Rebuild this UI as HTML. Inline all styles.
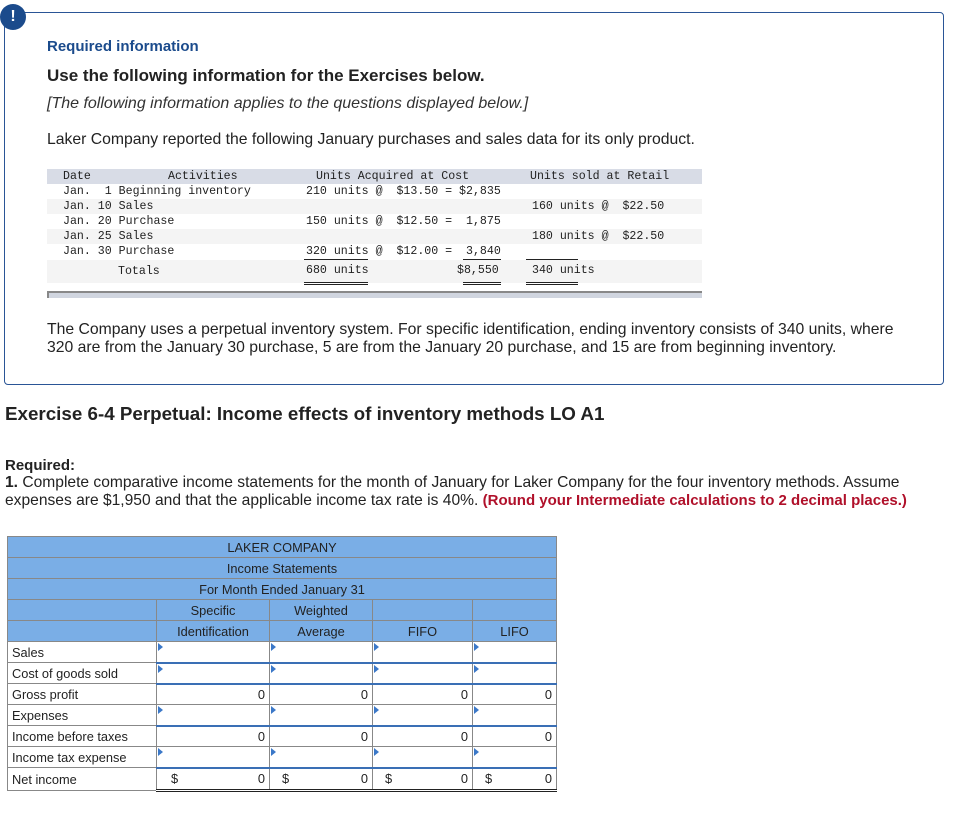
<!DOCTYPE html>
<html><head><style>
body{margin:0;width:955px;height:820px;background:#fff;position:relative;font-family:"Liberation Sans",sans-serif;color:#222;overflow:hidden}
.a{position:absolute;white-space:pre}
.m{font-family:"Liberation Mono",monospace;font-size:11.6px;color:#222}
.box{position:absolute;left:4px;top:12px;width:938px;height:371px;border:1px solid #2a5596;border-radius:4px}
.ic{position:absolute;left:0;top:4px;width:26px;height:26px;border-radius:50%;background:#1b4b8c;color:#fff;font-weight:bold;font-size:16px;text-align:center;line-height:26px}
.p{font-size:15.75px;color:#222}
.band{position:absolute;left:47px;width:655px;background:#f4f4f4}
.ul{position:absolute;border-top:1px solid #222}
.dl{position:absolute;border-top:3px double #222;height:0}
table{position:absolute;left:7px;top:536px;border-collapse:collapse;font-size:12.8px}
td{height:20px;padding:0 4px;border:1px solid #888;box-sizing:border-box}
.h td{background:#7aaee6;text-align:center;color:#222}
.in{border:1px solid #888;border-bottom:2px solid #3a6fb5;position:relative}
.in:before{content:"";position:absolute;left:1px;top:1px;border-left:5px solid #3b78c8;border-top:4px solid transparent;border-bottom:4px solid transparent}
.r{text-align:right}
</style></head><body>
<div class="box"></div>
<div class="ic">!</div>
<div class="a" style="left:47px;top:38px;font-size:15px;color:#1b4b8c;font-weight:bold">Required information</div>
<div class="a" style="left:47px;top:66px;font-size:17px;font-weight:bold;color:#222">Use the following information for the Exercises below.</div>
<div class="a" style="left:47px;top:95px;font-size:16px;font-style:italic;color:#333">[The following information applies to the questions displayed below.]</div>
<div class="a p" style="left:47px;top:131px">Laker Company reported the following January purchases and sales data for its only product.</div>

<div class="band" style="top:169px;height:15px;background:#d8dce6"></div>
<div class="band" style="top:199px;height:15px"></div>
<div class="band" style="top:229px;height:15px"></div>
<div class="band" style="top:260px;height:23px"></div>
<div class="a m" style="left:63px;top:170px">Date</div>
<div class="a m" style="left:168px;top:170px">Activities</div>
<div class="a m" style="left:316px;top:170px">Units Acquired at Cost</div>
<div class="a m" style="left:530px;top:170px">Units sold at Retail</div>
<div class="a m" style="left:63px;top:185px">Jan.  1 Beginning inventory</div>
<div class="a m" style="left:306px;top:185px">210 units @  $13.50 = $2,835</div>
<div class="a m" style="left:63px;top:200px">Jan. 10 Sales</div>
<div class="a m" style="left:532px;top:200px">160 units @  $22.50</div>
<div class="a m" style="left:63px;top:215px">Jan. 20 Purchase</div>
<div class="a m" style="left:306px;top:215px">150 units @  $12.50 =  1,875</div>
<div class="a m" style="left:63px;top:230px">Jan. 25 Sales</div>
<div class="a m" style="left:532px;top:230px">180 units @  $22.50</div>
<div class="a m" style="left:63px;top:245px">Jan. 30 Purchase</div>
<div class="a m" style="left:306px;top:245px">320 units @  $12.00 =  3,840</div>
<div class="ul" style="left:304px;top:259px;width:64px"></div>
<div class="ul" style="left:463px;top:259px;width:38px"></div>
<div class="ul" style="left:526px;top:259px;width:52px"></div>
<div class="a m" style="left:118px;top:265px">Totals</div>
<div class="a m" style="left:306px;top:264px">680 units</div>
<div class="a m" style="left:457px;top:264px">$8,550</div>
<div class="a m" style="left:532px;top:264px">340 units</div>
<div class="dl" style="left:304px;top:282px;width:64px"></div>
<div class="dl" style="left:463px;top:282px;width:38px"></div>
<div class="dl" style="left:526px;top:282px;width:52px"></div>
<div style="position:absolute;left:47px;top:291px;width:653px;height:5px;background:#d0d5df;border-top:2px solid #888;border-left:2px solid #888"></div>

<div class="a p" style="left:47px;top:321px;line-height:18px">The Company uses a perpetual inventory system. For specific identification, ending inventory consists of 340 units, where
320 are from the January 30 purchase, 5 are from the January 20 purchase, and 15 are from beginning inventory.</div>

<div class="a" style="left:5px;top:403px;font-size:18.8px;font-weight:bold;color:#222">Exercise 6-4 Perpetual: Income effects of inventory methods LO A1</div>
<div class="a" style="left:5px;top:457px;font-size:15px;font-weight:bold">Required:</div>
<div class="a" style="left:5px;top:474px;font-size:15.6px;line-height:18px"><b>1.</b> Complete comparative income statements for the month of January for Laker Company for the four inventory methods. Assume
expenses are $1,950 and that the applicable income tax rate is 40%. <b style="color:#b0102a;font-size:15px">(Round your Intermediate calculations to 2 decimal places.)</b></div>

<table>
<colgroup><col style="width:149px"><col style="width:113px"><col style="width:103px"><col style="width:100px"><col style="width:84px"></colgroup>
<tr class="h"><td colspan="5" style="height:21px">LAKER COMPANY</td></tr>
<tr class="h"><td colspan="5" style="height:21px">Income Statements</td></tr>
<tr class="h"><td colspan="5" style="height:21px">For Month Ended January 31</td></tr>
<tr class="h"><td style="height:21px"></td><td>Specific</td><td>Weighted</td><td></td><td></td></tr>
<tr class="h"><td style="height:21px"></td><td>Identification</td><td>Average</td><td>FIFO</td><td>LIFO</td></tr>
<tr><td style="height:21px">Sales</td><td class="in"></td><td class="in"></td><td class="in"></td><td class="in"></td></tr>
<tr><td style="height:21px">Cost of goods sold</td><td class="in"></td><td class="in"></td><td class="in"></td><td class="in"></td></tr>
<tr><td style="height:21px">Gross profit</td><td class="r">0</td><td class="r">0</td><td class="r">0</td><td class="r">0</td></tr>
<tr><td style="height:21px">Expenses</td><td class="in"></td><td class="in"></td><td class="in"></td><td class="in"></td></tr>
<tr><td style="height:21px">Income before taxes</td><td class="r">0</td><td class="r">0</td><td class="r">0</td><td class="r">0</td></tr>
<tr><td style="height:21px">Income tax expense</td><td class="in"></td><td class="in"></td><td class="in"></td><td class="in"></td></tr>
<tr><td style="height:23px;border-bottom:1px solid #888">Net income</td><td class="r" style="border-bottom:3px double #222"><span style="float:left;padding-left:10px">$</span>0</td><td class="r" style="border-bottom:3px double #222"><span style="float:left;padding-left:8px">$</span>0</td><td class="r" style="border-bottom:3px double #222"><span style="float:left;padding-left:8px">$</span>0</td><td class="r" style="border-bottom:3px double #222"><span style="float:left;padding-left:8px">$</span>0</td></tr>
</table>
</body></html>
